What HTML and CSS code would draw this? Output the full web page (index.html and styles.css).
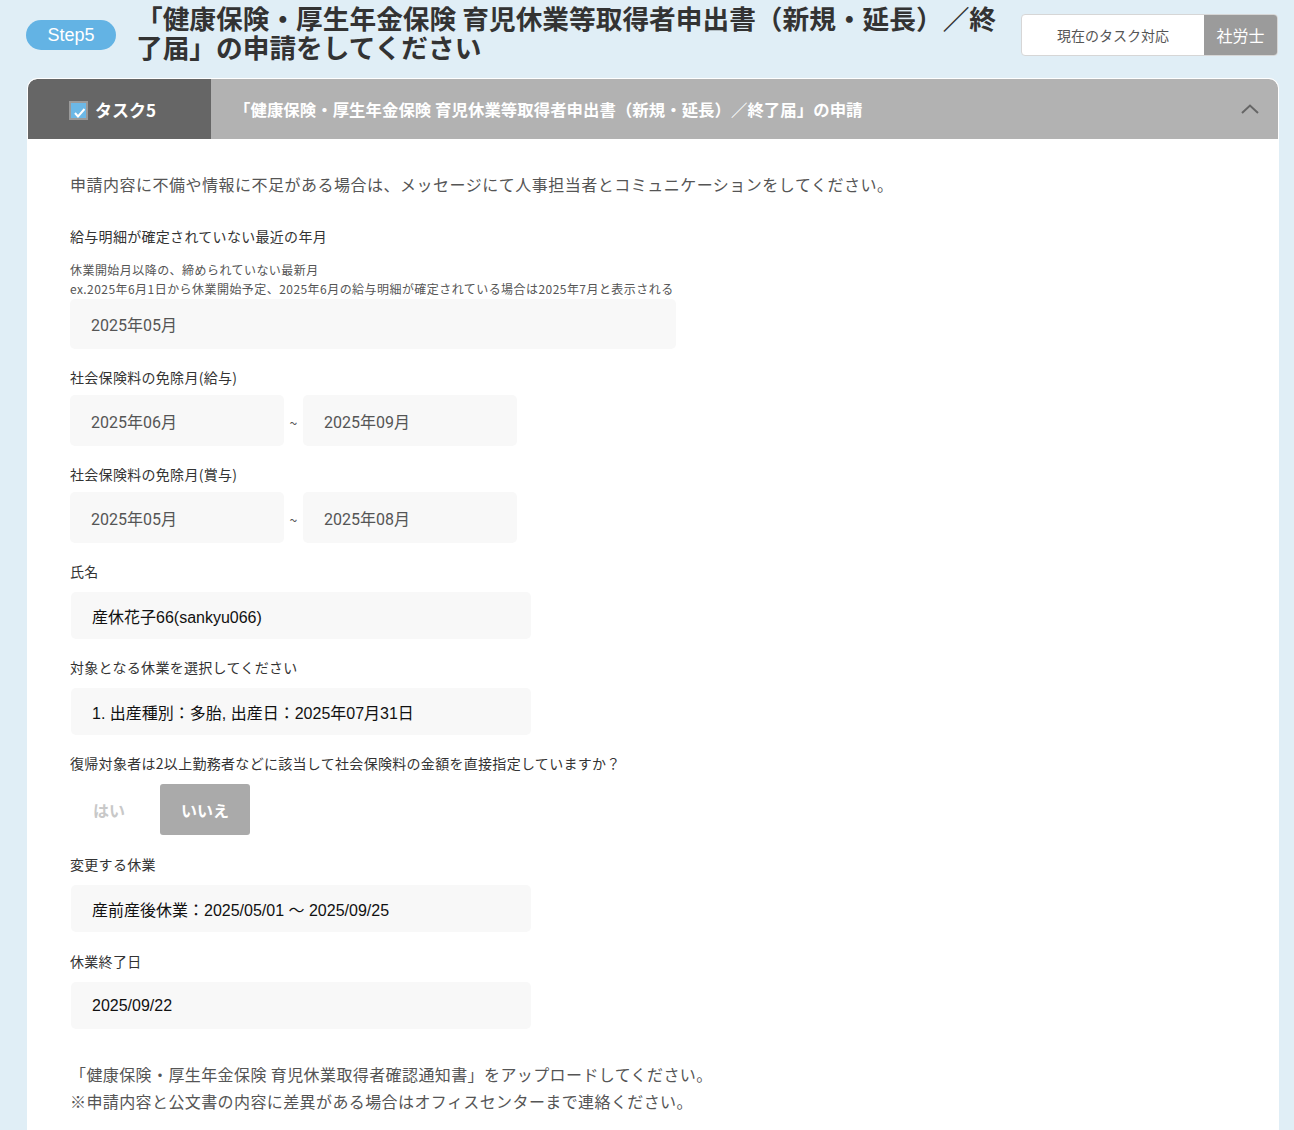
FILE: index.html
```html
<!DOCTYPE html>
<html lang="ja">
<head>
<meta charset="utf-8">
<title>Step5</title>
<link rel="stylesheet" href="styles.css">
</head>
<body>
<header class="top">
  <div class="badge">Step5</div>
  <h1 class="title">「健康保険・厚生年金保険 育児休業等取得者申出書（新規・延長）／終了届」の申請をしてください</h1>
  <div class="assign">
    <span class="assign-label">現在のタスク対応</span>
    <span class="assign-role">社労士</span>
  </div>
</header>

<section class="card">
  <div class="card-head">
    <div class="task-tab">
      <svg class="check" width="19" height="19" viewBox="0 0 19 19"><rect x="1" y="1" width="17" height="17" fill="#6cb8e6" stroke="#9a9a9a" stroke-width="2"/><path d="M6 12 L9 15.5 L15.5 8" fill="none" stroke="#fff" stroke-width="2"/></svg>
      <span>タスク5</span>
    </div>
    <div class="task-title">
      <span>「健康保険・厚生年金保険 育児休業等取得者申出書（新規・延長）／終了届」の申請</span>
      <svg class="chev" width="18" height="10" viewBox="0 0 18 10"><polyline points="1,9 9,1.5 17,9" fill="none" stroke="#666" stroke-width="2"/></svg>
    </div>
  </div>

  <div class="card-body">
    <p class="intro">申請内容に不備や情報に不足がある場合は、メッセージにて人事担当者とコミュニケーションをしてください。</p>

    <div class="group first">
      <div class="label">給与明細が確定されていない最近の年月</div>
      <p class="hint">休業開始月以降の、締められていない最新月<br>ex.2025年6月1日から休業開始予定、2025年6月の給与明細が確定されている場合は2025年7月と表示される</p>
      <div class="field month">2025年05月</div>
    </div>

    <div class="group">
      <div class="label">社会保険料の免除月(給与)</div>
      <div class="range">
        <div class="field half">2025年06月</div>
        <span class="tilde">~</span>
        <div class="field half">2025年09月</div>
      </div>
    </div>

    <div class="group">
      <div class="label">社会保険料の免除月(賞与)</div>
      <div class="range">
        <div class="field half">2025年05月</div>
        <span class="tilde">~</span>
        <div class="field half">2025年08月</div>
      </div>
    </div>

    <div class="group">
      <div class="label wide-label">氏名</div>
      <div class="field wide">産休花子66(sankyu066)</div>
    </div>

    <div class="group">
      <div class="label wide-label">対象となる休業を選択してください</div>
      <div class="field wide">1. 出産種別：多胎, 出産日：2025年07月31日</div>
    </div>

    <div class="group">
      <div class="label wide-label">復帰対象者は2以上勤務者などに該当して社会保険料の金額を直接指定していますか？</div>
      <div class="choices">
        <span class="opt">はい</span>
        <span class="opt active">いいえ</span>
      </div>
    </div>

    <div class="group loose">
      <div class="label wide-label">変更する休業</div>
      <div class="field wide">産前産後休業：2025/05/01 〜 2025/09/25</div>
    </div>

    <div class="group loose">
      <div class="label wide-label">休業終了日</div>
      <div class="field wide">2025/09/22</div>
    </div>

    <p class="note">「健康保険・厚生年金保険 育児休業取得者確認通知書」をアップロードしてください。<br>※申請内容と公文書の内容に差異がある場合はオフィスセンターまで連絡ください。</p>
  </div>
</section>
</body>
</html>
```

FILE: styles.css
```css
html, body {
  margin: 0;
  padding: 0;
}

body {
  background: #e0eef6;
  font-family: "Noto Sans CJK JP", "Noto Sans", sans-serif;
  color: #333;
}

.top {
  display: flex;
  align-items: flex-start;
  padding: 3px 16px 0 26px;
  margin-bottom: 17px;
}

.badge {
  flex: none;
  width: 90px;
  height: 30px;
  margin-top: 17px;
  border-radius: 15px;
  background: #63b3e4;
  color: #fff;
  font-family: "Liberation Sans", Arial, sans-serif;
  font-size: 18px;
  line-height: 30px;
  text-align: center;
}

.title {
  flex: 1;
  margin: 0 20px;
  font-size: 26.7px;
  line-height: 29px;
  font-weight: 700;
  color: #333;
}

.assign {
  flex: none;
  display: flex;
  margin-top: 11px;
  height: 42px;
  border: 1px solid #d6d6d6;
  border-radius: 4px;
  overflow: hidden;
  box-sizing: border-box;
  width: 257px;
  background: #fff;
}

.assign-label {
  width: 182px;
  display: flex;
  align-items: center;
  justify-content: center;
  font-size: 14px;
  color: #555;
}

.assign-role {
  flex: 1;
  display: flex;
  align-items: center;
  justify-content: center;
  background: #9b9b9b;
  color: #fff;
  font-size: 16px;
}

.card {
  margin: 0 15px 0 27px;
  background: #fff;
  border: 1px solid #fff;
  border-radius: 10px;
  overflow: hidden;
}

.card-head {
  display: flex;
  height: 60px;
  border-radius: 9px 9px 0 0;
  overflow: hidden;
}

.task-tab {
  flex: none;
  width: 183px;
  box-sizing: border-box;
  padding-left: 41px;
  display: flex;
  align-items: center;
  gap: 7px;
  background: #666;
  color: #fff;
  font-size: 17px;
  font-weight: 700;
}

.check {
  margin-top: 2px;
}

.task-title {
  flex: 1;
  display: flex;
  align-items: center;
  justify-content: space-between;
  padding: 0 19px 0 23px;
  background: #b2b2b2;
  color: #fff;
  font-size: 16.4px;
  font-weight: 700;
  letter-spacing: 0.05px;
}

.card-body {
  padding: 34px 40px 80px 42px;
}

.intro {
  margin: 0;
  font-size: 16px;
  line-height: 22px;
  letter-spacing: 0.5px;
  color: #555;
}

.group {
  margin-top: 18px;
}

.group.first {
  margin-top: 31px;
}

.group.loose {
  margin-top: 19px;
}

.label {
  font-size: 14px;
  line-height: 20px;
  letter-spacing: 0.3px;
  color: #333;
  margin-bottom: 8px;
}

.wide-label {
  margin-bottom: 11px;
}

.first .label {
  margin-bottom: 0;
}

.hint {
  margin: 14px 0 0;
  padding-bottom: 1px;
  font-size: 12px;
  line-height: 19px;
  letter-spacing: 0.45px;
  color: #555;
}

.field {
  display: flex;
  align-items: center;
  box-sizing: border-box;
  background: #f8f8f8;
  border-radius: 5px;
  font-family: "Roboto", "Noto Sans CJK JP", sans-serif;
  font-size: 16px;
  color: #555;
  padding-left: 21px;
}

.field.month {
  width: 606px;
  height: 50px;
}

.range {
  display: flex;
  align-items: center;
}

.field.half {
  width: 214px;
  height: 51px;
}

.tilde {
  width: 19px;
  text-align: center;
  font-size: 14px;
  color: #555;
  padding-top: 4px;
}

.field.wide {
  width: 460px;
  height: 47px;
  margin-left: 1px;
  font-family: "Liberation Sans", "Noto Sans CJK JP", sans-serif;
  color: #111;
}

.choices {
  display: flex;
  height: 51px;
}

.opt {
  width: 78px;
  display: flex;
  align-items: center;
  justify-content: center;
  font-size: 16px;
  font-weight: 700;
  color: #c8c8c8;
}

.opt.active {
  width: 90px;
  margin-left: 12px;
  background: #aaa;
  color: #fff;
  border-radius: 3px;
}

.note {
  margin: 32px 0 0;
  font-size: 16px;
  line-height: 27px;
  color: #555;
  letter-spacing: 0.4px;
}
```
